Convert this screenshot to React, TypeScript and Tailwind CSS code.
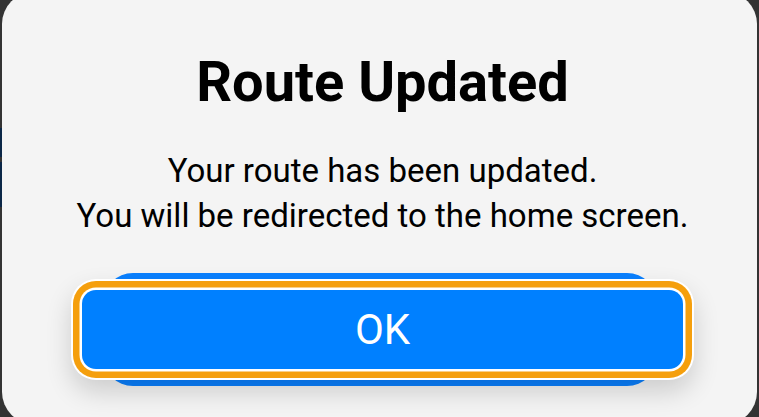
import React from "react";

export default function App() {
  return (
    <div className="relative flex h-[417px] w-[759px] flex-col overflow-hidden bg-[#333333] px-[2px] font-['Roboto',sans-serif]">
      {/* bits of the screen behind the dialog */}
      <div className="absolute left-0 top-[128px] h-[29px] w-[6px] bg-[#0b2747]" />
      <div className="absolute left-0 top-[162px] h-[45px] w-[6px] bg-[#0b2747]" />

      <div className="relative -mt-[8px] flex h-[432px] shrink-0 flex-col rounded-[32px] bg-[#f4f4f4] pl-[80px] pr-[74px] pt-[57px]">
        <h1 className="text-center text-[56px] font-bold leading-[1.2] text-black">
          Route Updated
        </h1>
        <p className="-mx-[30px] mt-[32px] whitespace-nowrap text-center text-[33px] leading-[45px] text-black">
          Your route has been updated.
          <br />
          You will be redirected to the home screen.
        </p>
        <div className="relative mt-[52px]">
          <div className="absolute bottom-[-17px] left-[21px] right-[26px] top-[-17px] rounded-[30px] bg-[#0a80ff] blur-[0.5px]" />
          <button
            type="button"
            className="relative flex h-[79px] w-full items-center justify-center rounded-[14px] bg-[#0080ff] text-[42px] leading-none text-white shadow-[0_0_0_2.5px_#ffffff,0_0_0_9px_#f59f0d,0_0_0_11px_#ffffff,0_12px_26px_11px_rgba(0,0,0,0.16)]"
          >
            OK
          </button>
        </div>
      </div>
    </div>
  );
}
